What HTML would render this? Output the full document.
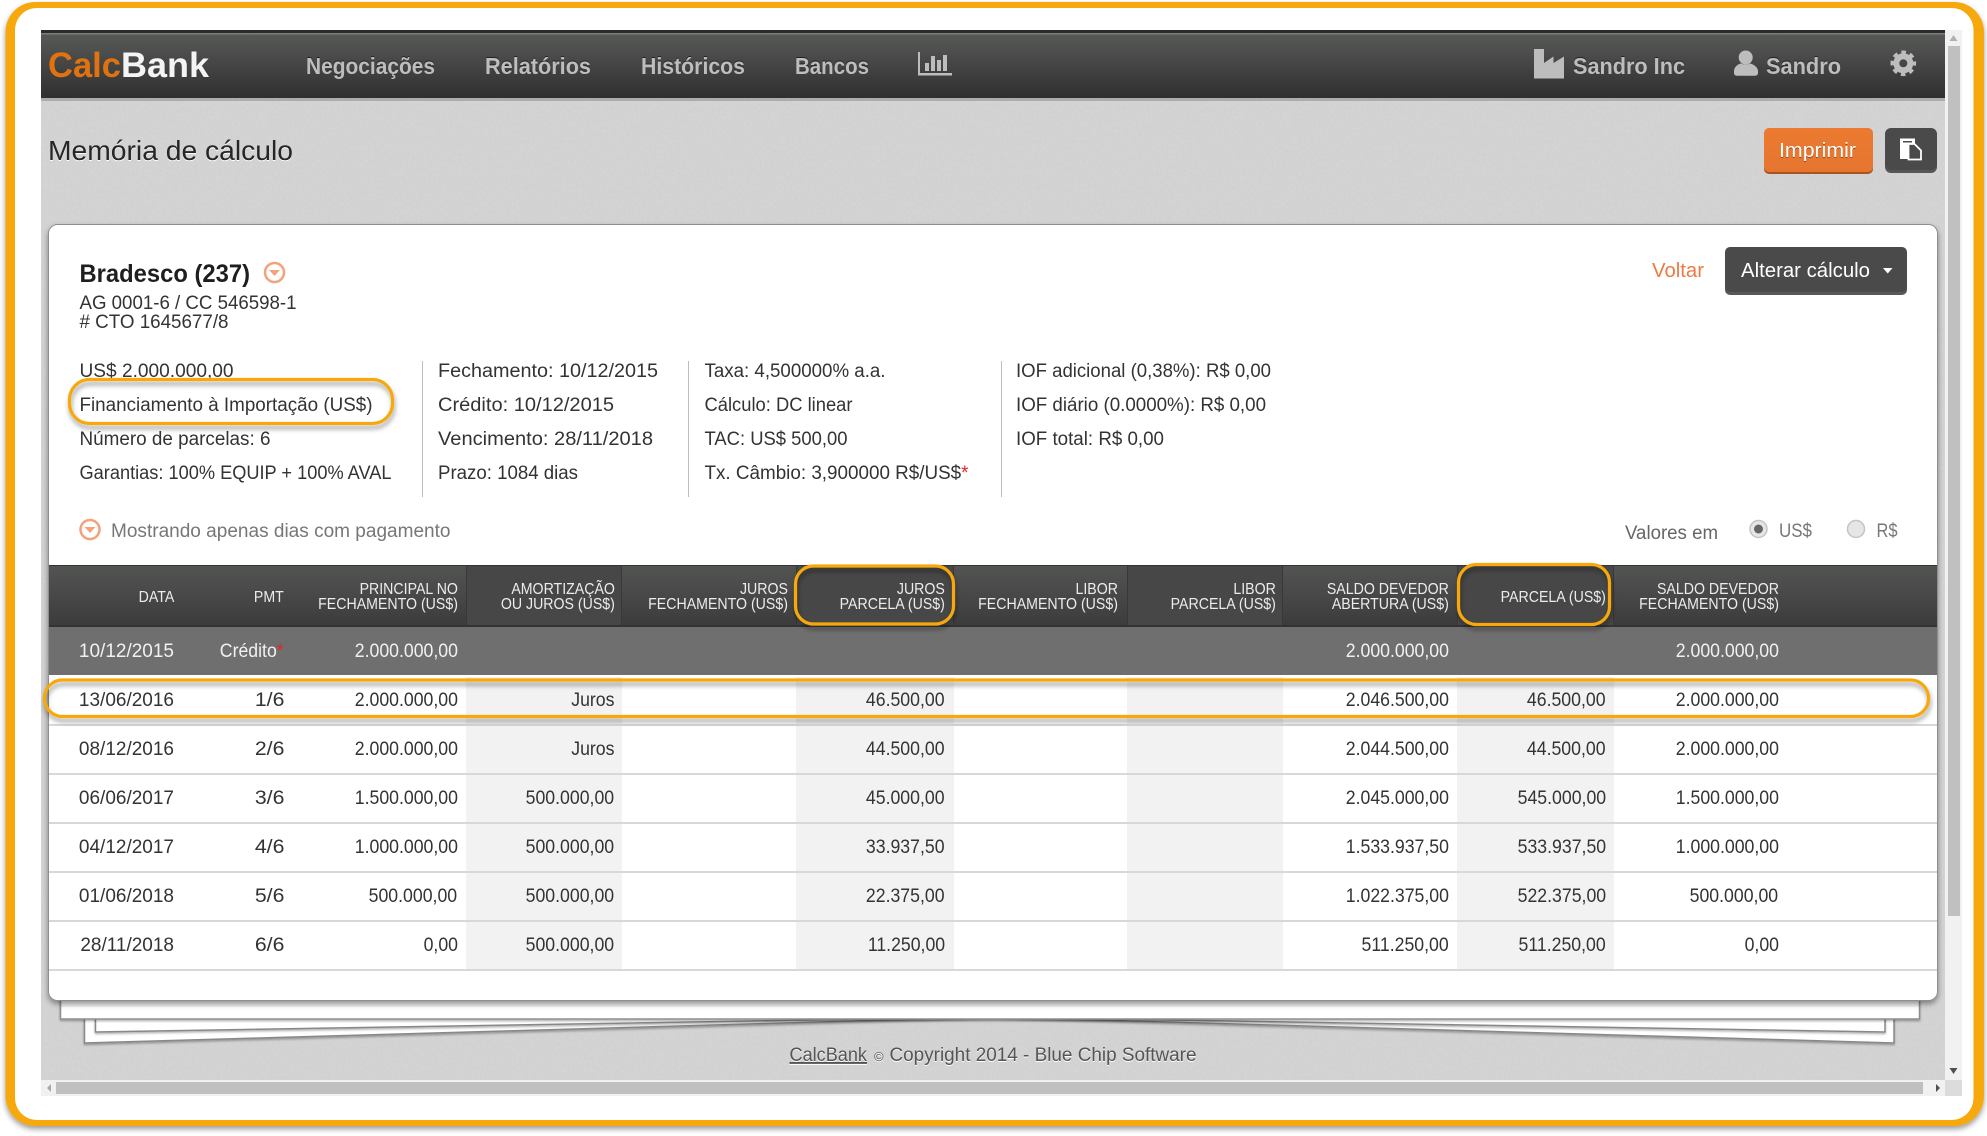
<!DOCTYPE html>
<html lang="pt-BR">
<head>
<meta charset="utf-8">
<title>CalcBank - Memória de cálculo</title>
<style>
html,body{margin:0;padding:0;background:#fff;width:1987px;height:1136px;overflow:hidden}
body{position:relative;font-family:"Liberation Sans",sans-serif}
svg.layer{position:absolute;left:0;top:0;width:1987px;height:1136px;display:block}
svg text{font-family:"Liberation Sans",sans-serif}
.nav{font-size:23px;font-weight:700;fill:#bdbdbd;filter:drop-shadow(0 -1px 0 #222)}
.info{font-size:19px;fill:#333}
.ws{filter:drop-shadow(0 1px 0 #fff)}
#tbl{position:absolute;left:0;top:0;width:1987px;height:1136px}
.bg{position:absolute}
.row{position:absolute;left:0;width:1987px;height:49px;line-height:49px;font-size:19px;color:#333}
.row span{position:absolute;top:0;white-space:nowrap;transform:scaleX(.93);transform-origin:100% 50%}
.row span.c1{transform:scaleX(1)}
.row:not(.dark) span.c2{transform:scaleX(1.12)}
.row.dark{height:48px;line-height:48px;color:#f1f1f1}
.hd span{position:absolute;white-space:nowrap;color:#ececec;font-size:16px;line-height:15px;text-align:right;transform:scaleX(.885);transform-origin:100% 50%}
.c1{right:1813px}.c2{right:1703px}.c3{right:1529.5px}.c4{right:1372.5px}.c5{right:1199.5px}.c6{right:1042px}.c7{right:869.5px}.c8{right:711.5px}.c9{right:538.5px}.c10{right:381px}.c11{right:208.5px}
i{font-style:normal;color:#e8212b}
</style>
</head>
<body>
<svg class="layer" viewBox="0 0 1987 1136" xmlns="http://www.w3.org/2000/svg">
<defs>
<linearGradient id="gn" x1="0" y1="0" x2="0" y2="1"><stop offset="0" stop-color="#5a5c5a"/><stop offset="1" stop-color="#2f2f2f"/></linearGradient>
<linearGradient id="go" x1="0" y1="0" x2="0" y2="1"><stop offset="0" stop-color="#ec7a30"/><stop offset="1" stop-color="#e57530"/></linearGradient>
<filter id="noise" x="0" y="0" width="100%" height="100%"><feTurbulence type="fractalNoise" baseFrequency=".5 .3" numOctaves="3" seed="4"/><feColorMatrix values="0 0 0 0 .5 0 0 0 0 .5 0 0 0 0 .5 0 0 0 1.6 -.55"/></filter>
<filter id="sh" x="-5%" y="-5%" width="110%" height="110%"><feDropShadow dx="0" dy="3" stdDeviation="3" flood-color="#000" flood-opacity=".4"/></filter>
<filter id="sh2" x="-5%" y="-30%" width="110%" height="180%"><feDropShadow dx="0" dy="1.500" stdDeviation="1" flood-color="#000" flood-opacity=".3"/></filter>
</defs>

<!-- outer ring -->
<rect x="5.500" y="2" width="1978.500" height="1124" rx="30" fill="#f7a808" filter="url(#sh)"/>
<rect x="15" y="8" width="1958.500" height="1112" rx="22" fill="#fff"/>

<!-- viewport bg -->
<rect x="41" y="30" width="1904" height="1050" fill="#d4d4d4"/>
<rect x="41" y="30" width="1904" height="1050" filter="url(#noise)" opacity=".2"/>

<!-- scrollbars -->
<rect x="1945" y="30" width="17" height="1066" fill="#f1f1f1"/>
<rect x="1948" y="46" width="12" height="870" fill="#c0c0c0"/>
<path d="M1953.500 35l4 6h-8z" fill="#b0b0b0"/>
<path d="M1953.500 1074l4-6h-8z" fill="#505050"/>
<rect x="41" y="1080" width="1904" height="16" fill="#f1f1f1"/>
<rect x="56" y="1082" width="1867" height="12" fill="#c0c0c0"/>
<path d="M47 1088l4-4v8z" fill="#a8a8a8"/>
<path d="M1940 1088l-4-4v8z" fill="#505050"/>
<rect x="1945" y="1080" width="17" height="16" fill="#dcdcdc"/>

<!-- navbar -->
<rect x="41" y="98" width="1904" height="3" fill="#000" opacity=".18"/>
<rect x="41" y="30" width="1904" height="68" fill="url(#gn)"/>
<rect x="41" y="30" width="1904" height="3" fill="#2b2b2b"/>
<rect x="41" y="33" width="1904" height="1.500" fill="#7c7c7c"/>

<text x="48" y="77" font-size="35" font-weight="700" fill="#e0730f" textLength="73" lengthAdjust="spacingAndGlyphs">Calc</text>
<text x="121" y="77" font-size="35" font-weight="700" fill="#f4f4f4" textLength="88" lengthAdjust="spacingAndGlyphs">Bank</text>
<text class="nav" x="306" y="74" textLength="129" lengthAdjust="spacingAndGlyphs">Negociações</text>
<text class="nav" x="485" y="74" textLength="106" lengthAdjust="spacingAndGlyphs">Relatórios</text>
<text class="nav" x="641" y="74" textLength="104" lengthAdjust="spacingAndGlyphs">Históricos</text>
<text class="nav" x="795" y="74" textLength="74" lengthAdjust="spacingAndGlyphs">Bancos</text>
<path d="M918 52h2v21h32v2.500h-34z" fill="#bdbdbd"/>
<path d="M925 63h4v8h-4zM931 56h4v15h-4zM937 60h4v11h-4zM943 55h4v16h-4z" fill="#bdbdbd"/>

<path d="M1534 49h10v14l9.500-6.500v6.500l10.500-6.500v22h-30z" fill="#bdbdbd"/>
<text class="nav" x="1573" y="74" textLength="112" lengthAdjust="spacingAndGlyphs">Sandro Inc</text>
<circle cx="1745.700" cy="57.500" r="7" fill="#bdbdbd"/>
<path d="M1734 73v-2c0-4 4-7 7-7.500 3 1.500 6 1.500 9 0 3 .5 8 3.500 8 7.500v2q0 2.700-3 2.700h-18q-3 0-3-2.700z" fill="#bdbdbd"/>
<text class="nav" x="1766" y="74" textLength="75" lengthAdjust="spacingAndGlyphs">Sandro</text>
<g transform="translate(1903.300 63.300)" fill="none" stroke="#bdbdbd">
<circle r="7" stroke-width="6"/>
<circle r="11" stroke-width="3.600" stroke-dasharray="4.600 4.040" stroke-dashoffset="2.300"/>
</g>

<!-- page title -->
<text class="ws" x="48" y="160" font-size="28" fill="#262626" textLength="245" lengthAdjust="spacingAndGlyphs">Memória de cálculo</text>

<!-- top buttons -->
<rect x="1764" y="130" width="109" height="44" rx="5" fill="#a9551f"/>
<rect x="1764" y="128" width="109" height="44" rx="5" fill="url(#go)"/>
<text x="1779" y="157" font-size="20" fill="#fff" textLength="77" lengthAdjust="spacingAndGlyphs" style="filter:drop-shadow(0 1px 0 #8a4a1c)">Imprimir</text>
<rect x="1885" y="130" width="52" height="43" rx="6" fill="#2e2e2e" opacity=".75"/>
<rect x="1885" y="128" width="52" height="42" rx="6" fill="#4a4a4a"/>
<path d="M1900 138.500h15v20.500h-15z" fill="#fff"/>
<rect x="1903" y="141" width="9" height="1.500" fill="#4a4a4a"/>
<path d="M1908.500 144h6l6.500 6.500v9h-12.500z" fill="#4a4a4a" stroke="#fff" stroke-width="1.800"/>

<!-- paper sheets -->
<path d="M84.500 1015V1043L993 1017L1894 1043V1015z" fill="#fff" stroke="#888" stroke-width="1.500" filter="url(#sh2)"/>
<path d="M95.500 1015V1032L993 1017L1885 1032V1015z" fill="#fff" stroke="#888" stroke-width="1.500" filter="url(#sh2)"/>
<rect x="60.500" y="990" width="1859" height="29" fill="#fff" stroke="#8e8e8e" stroke-width="1.500" filter="url(#sh2)"/>
<rect x="61" y="1001" width="1858" height="6" fill="#000" opacity=".05"/>

<!-- card -->
<rect x="48.500" y="224.500" width="1889" height="776" rx="9" fill="#fff" stroke="#8e8e8e" filter="url(#sh)"/>

<text x="79.500" y="282" font-size="25" font-weight="700" fill="#1e1e1e" textLength="170.500" lengthAdjust="spacingAndGlyphs">Bradesco (237)</text>
<circle cx="274.500" cy="272.500" r="9.500" fill="none" stroke="#f3a27c" stroke-width="2.500"/>
<path d="M269 270h11l-5.500 6z" fill="#f3a27c"/>
<text class="info" x="79.500" y="309" textLength="217" lengthAdjust="spacingAndGlyphs">AG 0001-6 / CC 546598-1</text>
<text class="info" x="79.500" y="328" textLength="149" lengthAdjust="spacingAndGlyphs"># CTO 1645677/8</text>

<text class="info" x="79.500" y="377" textLength="154" lengthAdjust="spacingAndGlyphs">US$ 2.000.000,00</text>
<text class="info" x="79.500" y="411" textLength="293" lengthAdjust="spacingAndGlyphs">Financiamento à Importação (US$)</text>
<text class="info" x="79.500" y="445" textLength="191" lengthAdjust="spacingAndGlyphs">Número de parcelas: 6</text>
<text class="info" x="79.500" y="479" textLength="312" lengthAdjust="spacingAndGlyphs">Garantias: 100% EQUIP + 100% AVAL</text>

<rect x="422" y="361" width="1" height="136" fill="#bdbdbd"/>
<text class="info" x="438" y="377" textLength="220" lengthAdjust="spacingAndGlyphs">Fechamento: 10/12/2015</text>
<text class="info" x="438" y="411" textLength="176" lengthAdjust="spacingAndGlyphs">Crédito: 10/12/2015</text>
<text class="info" x="438" y="445" textLength="215" lengthAdjust="spacingAndGlyphs">Vencimento: 28/11/2018</text>
<text class="info" x="438" y="479" textLength="140" lengthAdjust="spacingAndGlyphs">Prazo: 1084 dias</text>

<rect x="688" y="361" width="1" height="136" fill="#bdbdbd"/>
<text class="info" x="704.500" y="377" textLength="181" lengthAdjust="spacingAndGlyphs">Taxa: 4,500000% a.a.</text>
<text class="info" x="704.500" y="411" textLength="148" lengthAdjust="spacingAndGlyphs">Cálculo: DC linear</text>
<text class="info" x="704.500" y="445" textLength="143" lengthAdjust="spacingAndGlyphs">TAC: US$ 500,00</text>
<text class="info" x="704.500" y="479" textLength="264" lengthAdjust="spacingAndGlyphs">Tx. Câmbio: 3,900000 R$/US$<tspan fill="#e8212b">*</tspan></text>

<rect x="1001" y="361" width="1" height="136" fill="#bdbdbd"/>
<text class="info" x="1016" y="377" textLength="255" lengthAdjust="spacingAndGlyphs">IOF adicional (0,38%): R$ 0,00</text>
<text class="info" x="1016" y="411" textLength="250" lengthAdjust="spacingAndGlyphs">IOF diário (0.0000%): R$ 0,00</text>
<text class="info" x="1016" y="445" textLength="148" lengthAdjust="spacingAndGlyphs">IOF total: R$ 0,00</text>

<circle cx="90" cy="529.500" r="9.500" fill="none" stroke="#f3a27c" stroke-width="2.500"/>
<path d="M84.500 527h11l-5.500 6z" fill="#f3a27c"/>
<text x="111" y="537" font-size="19" fill="#777" textLength="339.500" lengthAdjust="spacingAndGlyphs">Mostrando apenas dias com pagamento</text>

<text x="1652" y="277" font-size="20" fill="#ea7b45" textLength="52" lengthAdjust="spacingAndGlyphs">Voltar</text>
<rect x="1725" y="249" width="182" height="46" rx="5" fill="#2e2e2e" opacity=".8"/>
<rect x="1725" y="247" width="182" height="45" rx="5" fill="#4a4a4a"/>
<text x="1741" y="277" font-size="20" fill="#fff" textLength="129" lengthAdjust="spacingAndGlyphs">Alterar cálculo</text>
<path d="M1883 268h9.500l-4.750 5.500z" fill="#fff"/>

<text x="1625" y="539" font-size="19" fill="#666" textLength="93" lengthAdjust="spacingAndGlyphs">Valores em</text>
<circle cx="1758.500" cy="529" r="8.500" fill="#e6e6e6" stroke="#c4c4c4" stroke-width="1.500"/>
<circle cx="1758.500" cy="529" r="4.500" fill="#666"/>
<text x="1779" y="537" font-size="19" fill="#777" textLength="33" lengthAdjust="spacingAndGlyphs">US$</text>
<circle cx="1856" cy="529" r="8.500" fill="#e6e6e6" stroke="#c4c4c4" stroke-width="1.500"/>
<text x="1876.500" y="537" font-size="19" fill="#777" textLength="21" lengthAdjust="spacingAndGlyphs">R$</text>

<!-- footer -->
<g class="ws">
<text x="789.500" y="1061" font-size="19" fill="#555" text-decoration="underline" textLength="77.500" lengthAdjust="spacingAndGlyphs">CalcBank</text>
<text x="874" y="1061" font-size="13" fill="#555">©</text>
<text x="889.500" y="1061" font-size="19" fill="#555" textLength="307" lengthAdjust="spacingAndGlyphs">Copyright 2014 - Blue Chip Software</text>
</g>
</svg>

<!-- table -->
<div id="tbl">
<div class="bg" style="left:49px;top:565px;width:1888px;height:62px;background:linear-gradient(#525452,#3c3c3c);border-top:1px solid #333;box-sizing:border-box;border-bottom:2px solid #333"></div>
<div class="bg" style="left:466px;top:566px;width:156px;height:59px;background:#474747;border-left:1px solid #383838;border-right:1px solid #383838;box-sizing:border-box"></div>
<div class="bg" style="left:796px;top:566px;width:158px;height:59px;background:#474747;border-left:1px solid #383838;border-right:1px solid #383838;box-sizing:border-box"></div>
<div class="bg" style="left:1127px;top:566px;width:156px;height:59px;background:#474747;border-left:1px solid #383838;border-right:1px solid #383838;box-sizing:border-box"></div>
<div class="bg" style="left:1457px;top:566px;width:157px;height:59px;background:#474747;border-left:1px solid #383838;border-right:1px solid #383838;box-sizing:border-box"></div>

<div class="bg" style="left:49px;top:627px;width:1888px;height:48px;background:#6f6f6f"></div>
<div class="bg" style="left:466px;top:677px;width:156px;height:292px;background:#f2f2f2"></div>
<div class="bg" style="left:796px;top:677px;width:158px;height:292px;background:#f2f2f2"></div>
<div class="bg" style="left:1127px;top:677px;width:156px;height:292px;background:#f2f2f2"></div>
<div class="bg" style="left:1457px;top:677px;width:157px;height:292px;background:#f2f2f2"></div>
<div class="bg" style="left:49px;top:724px;width:1888px;height:1.500px;background:#d8d8d8"></div>
<div class="bg" style="left:49px;top:773px;width:1888px;height:1.500px;background:#d8d8d8"></div>
<div class="bg" style="left:49px;top:822px;width:1888px;height:1.500px;background:#d8d8d8"></div>
<div class="bg" style="left:49px;top:871px;width:1888px;height:1.500px;background:#d8d8d8"></div>
<div class="bg" style="left:49px;top:920px;width:1888px;height:1.500px;background:#d8d8d8"></div>
<div class="bg" style="left:49px;top:969px;width:1888px;height:1.500px;background:#d8d8d8"></div>

<div class="hd">
<span class="c1" style="top:590px">DATA</span>
<span class="c2" style="top:590px">PMT</span>
<span class="c3" style="top:582px">PRINCIPAL NO<br>FECHAMENTO (US$)</span>
<span class="c4" style="top:582px">AMORTIZAÇÃO<br>OU JUROS (US$)</span>
<span class="c5" style="top:582px">JUROS<br>FECHAMENTO (US$)</span>
<span class="c6" style="top:582px">JUROS<br>PARCELA (US$)</span>
<span class="c7" style="top:582px">LIBOR<br>FECHAMENTO (US$)</span>
<span class="c8" style="top:582px">LIBOR<br>PARCELA (US$)</span>
<span class="c9" style="top:582px">SALDO DEVEDOR<br>ABERTURA (US$)</span>
<span class="c10" style="top:590px">PARCELA (US$)</span>
<span class="c11" style="top:582px">SALDO DEVEDOR<br>FECHAMENTO (US$)</span>
</div>

<div class="row dark" style="top:628px"><span class="c1">10/12/2015</span><span class="c2">Crédito<i>*</i></span><span class="c3">2.000.000,00</span><span class="c9">2.000.000,00</span><span class="c11">2.000.000,00</span></div>
<div class="row" style="top:676px"><span class="c1">13/06/2016</span><span class="c2">1/6</span><span class="c3">2.000.000,00</span><span class="c4">Juros</span><span class="c6">46.500,00</span><span class="c9">2.046.500,00</span><span class="c10">46.500,00</span><span class="c11">2.000.000,00</span></div>
<div class="row" style="top:725px"><span class="c1">08/12/2016</span><span class="c2">2/6</span><span class="c3">2.000.000,00</span><span class="c4">Juros</span><span class="c6">44.500,00</span><span class="c9">2.044.500,00</span><span class="c10">44.500,00</span><span class="c11">2.000.000,00</span></div>
<div class="row" style="top:774px"><span class="c1">06/06/2017</span><span class="c2">3/6</span><span class="c3">1.500.000,00</span><span class="c4">500.000,00</span><span class="c6">45.000,00</span><span class="c9">2.045.000,00</span><span class="c10">545.000,00</span><span class="c11">1.500.000,00</span></div>
<div class="row" style="top:823px"><span class="c1">04/12/2017</span><span class="c2">4/6</span><span class="c3">1.000.000,00</span><span class="c4">500.000,00</span><span class="c6">33.937,50</span><span class="c9">1.533.937,50</span><span class="c10">533.937,50</span><span class="c11">1.000.000,00</span></div>
<div class="row" style="top:872px"><span class="c1">01/06/2018</span><span class="c2">5/6</span><span class="c3">500.000,00</span><span class="c4">500.000,00</span><span class="c6">22.375,00</span><span class="c9">1.022.375,00</span><span class="c10">522.375,00</span><span class="c11">500.000,00</span></div>
<div class="row" style="top:921px"><span class="c1">28/11/2018</span><span class="c2">6/6</span><span class="c3">0,00</span><span class="c4">500.000,00</span><span class="c6">11.250,00</span><span class="c9">511.250,00</span><span class="c10">511.250,00</span><span class="c11">0,00</span></div>
</div>

<!-- highlight overlays -->
<svg class="layer" viewBox="0 0 1987 1136" xmlns="http://www.w3.org/2000/svg" style="pointer-events:none">
<defs><filter id="hl" x="-10%" y="-30%" width="120%" height="170%"><feDropShadow dx="1" dy="4" stdDeviation="2.500" flood-color="#000" flood-opacity=".38"/></filter></defs>
<g fill="none" stroke="#f7a808" stroke-width="3.200" filter="url(#hl)">
<rect x="69.500" y="379.500" width="323" height="44" rx="20"/>
<rect x="44.500" y="680" width="1884" height="36.500" rx="18"/>
<rect x="795.500" y="566" width="158" height="58" rx="18"/>
<rect x="1458.500" y="564.500" width="151" height="60" rx="18"/>
</g>
</svg>
</body>
</html>
